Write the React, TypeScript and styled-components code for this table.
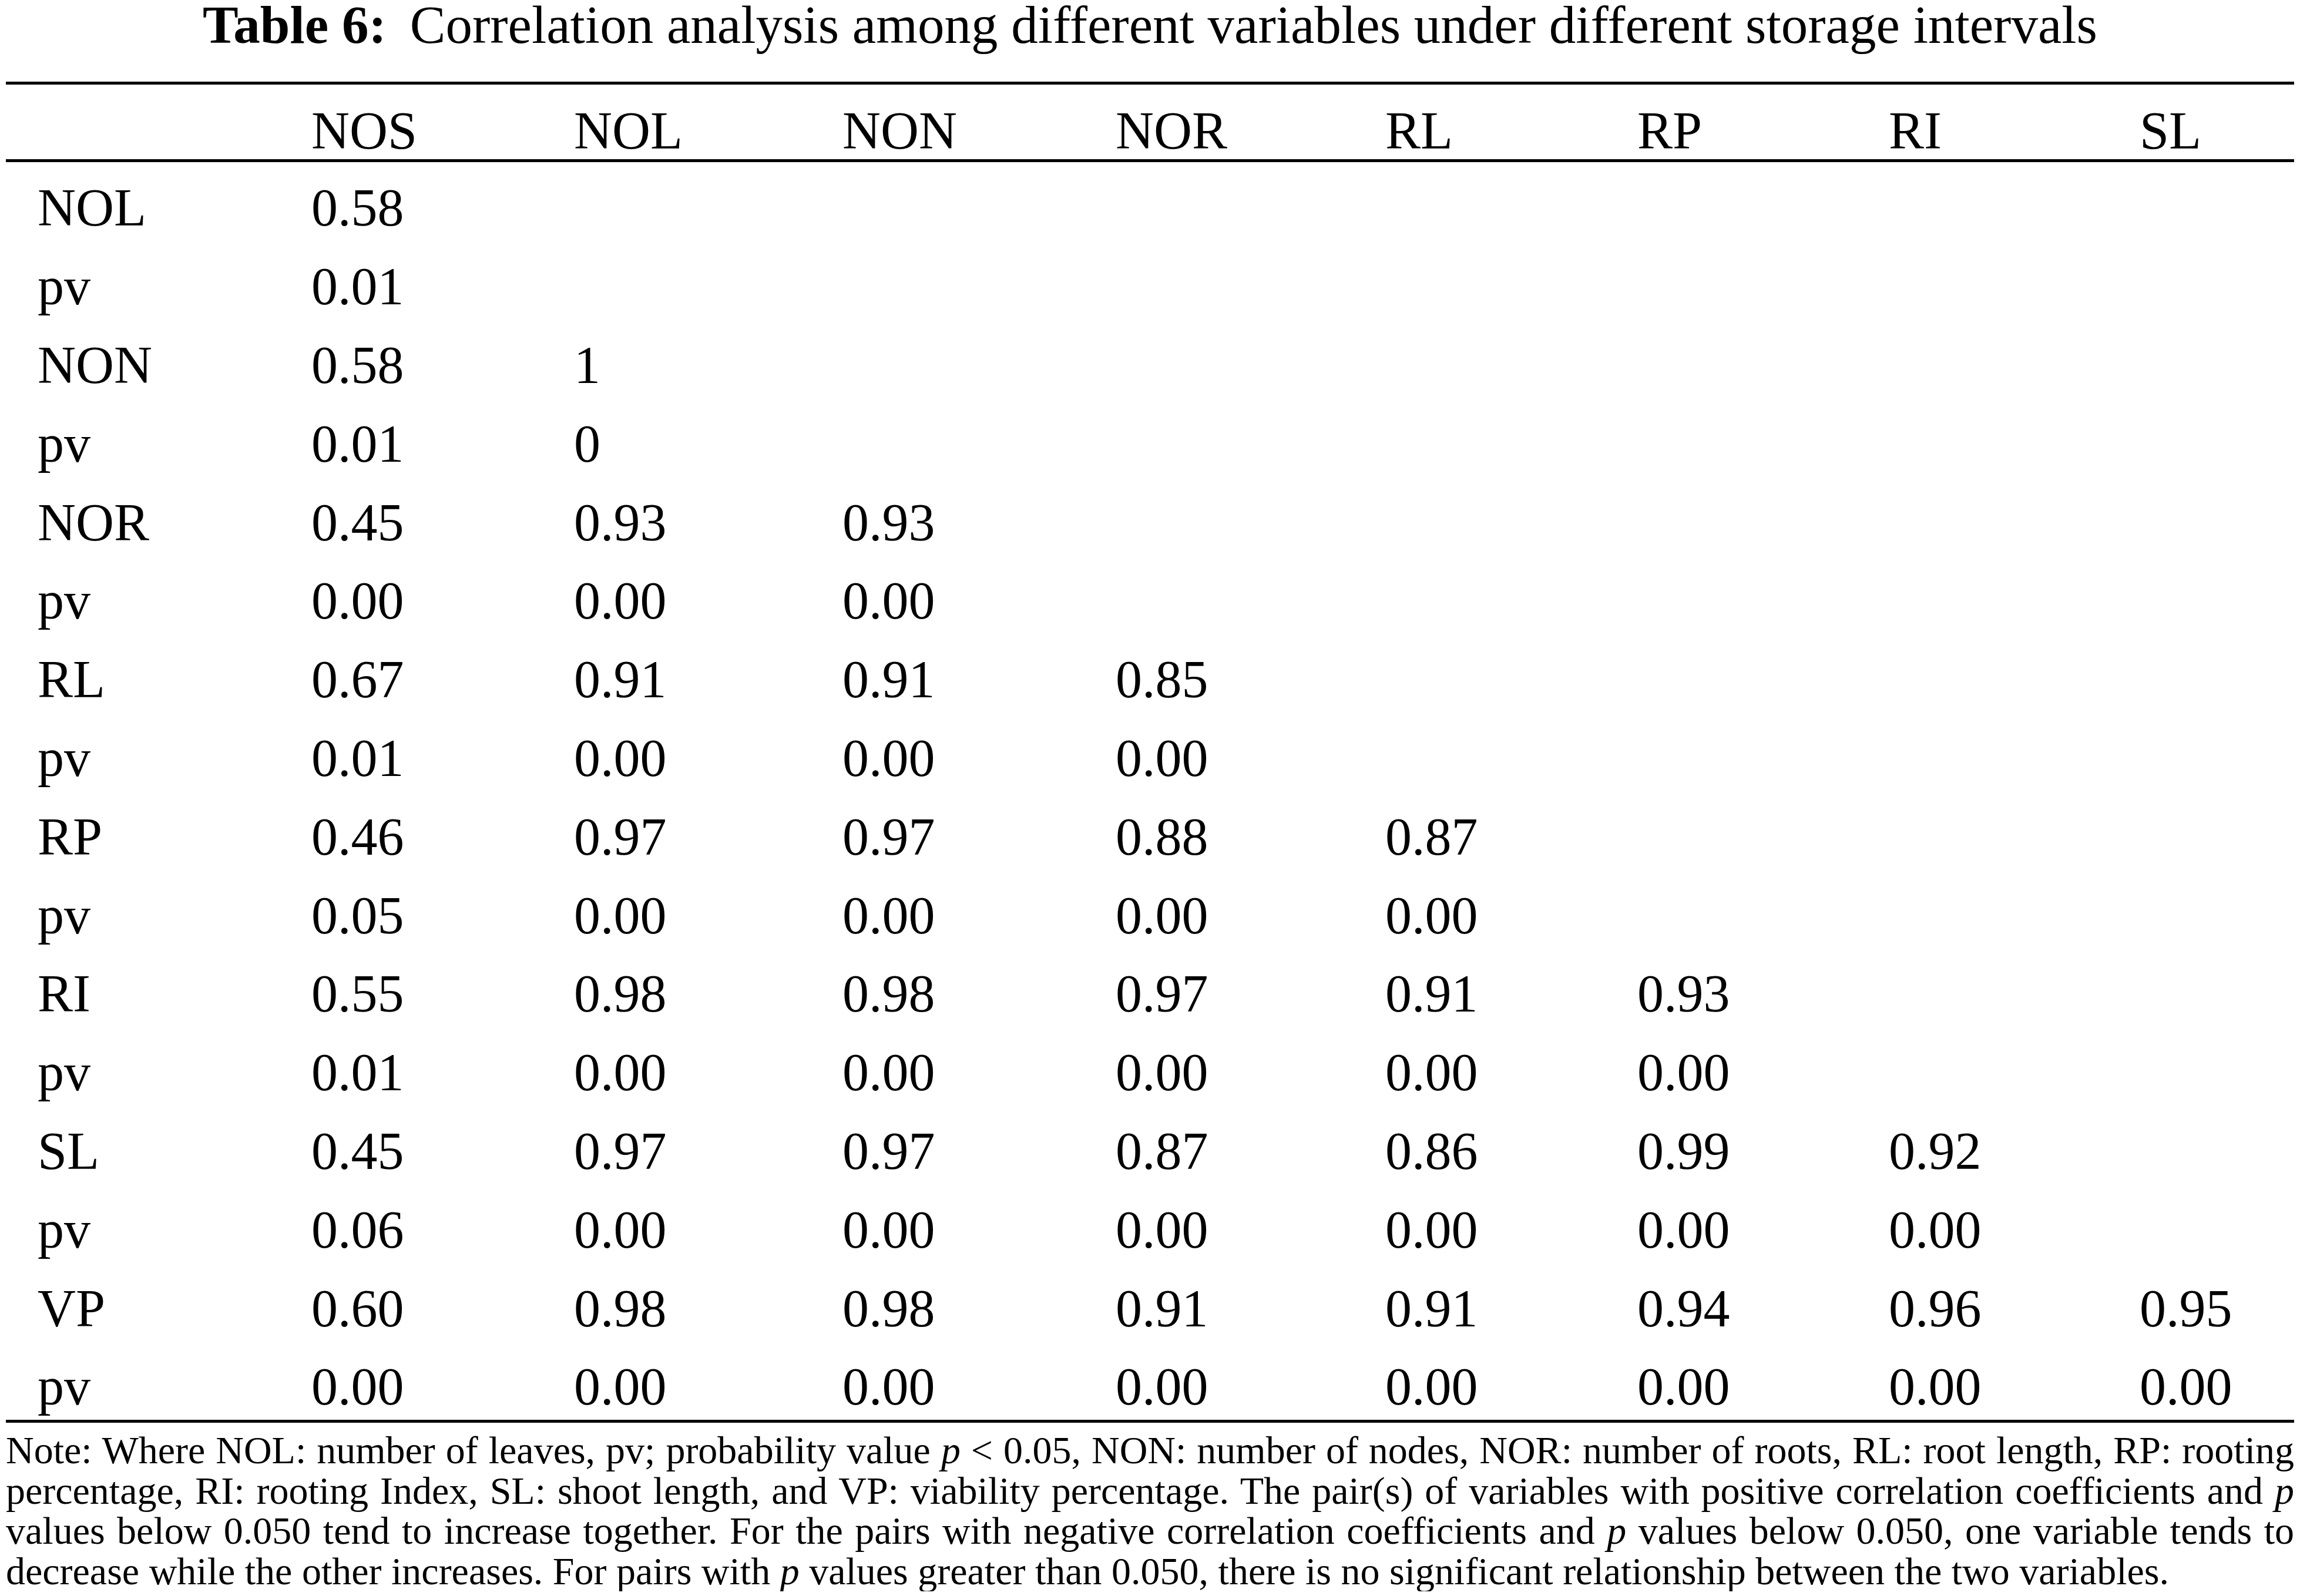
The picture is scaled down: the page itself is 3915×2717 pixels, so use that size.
import React from 'react'
import styled, { createGlobalStyle } from 'styled-components'

const GlobalStyle = createGlobalStyle`
  html, body {
    margin: 0;
    padding: 0;
    background: #fff;
  }
`

// label column + one column per variable (left edges taken from the print)
const COLUMNS = '520px 447px 457px 465px 459px 429px 428px 427px 1fr'

const Page = styled.div`
  padding: 0 10px;
  font-family: "Liberation Serif", "Times New Roman", serif;
  color: #000;
`

const Caption = styled.div`
  font-size: 91px;
  line-height: 85px;
  text-align: center;
  margin-bottom: 54px;
  white-space: nowrap;

  & > b {
    font-weight: bold;
    margin-right: 40px;
  }
`

const Table = styled.div`
  border-top: 5px solid #000;
  border-bottom: 5px solid #000;
  font-size: 90px;
`

const Row = styled.div<{ $head?: boolean }>`
  display: grid;
  grid-template-columns: ${COLUMNS};
  height: ${p => (p.$head ? '132px' : '133.8px')};
  padding-top: ${p => (p.$head ? '25px' : '23.4px')};
  line-height: ${p => (p.$head ? '107px' : '110.4px')};
  box-sizing: border-box;
  border-bottom: ${p => (p.$head ? '5px solid #000' : 'none')};
  white-space: nowrap;
`

const Label = styled.div`
  padding-left: 54px;
`

const Cell = styled.div``

const Note = styled.div`
  margin-top: 13.5px;
  font-size: 66px;
  line-height: 68.5px;

  & i {
    font-style: italic;
  }
`

const NoteLine = styled.div<{ $last?: boolean }>`
  white-space: nowrap;
  text-align: ${p => (p.$last ? 'left' : 'justify')};
  text-align-last: ${p => (p.$last ? 'left' : 'justify')};
`

const heads = ['NOS', 'NOL', 'NON', 'NOR', 'RL', 'RP', 'RI', 'SL']

const rows: [string, string[]][] = [
  ['NOL', ['0.58']],
  ['pv', ['0.01']],
  ['NON', ['0.58', '1']],
  ['pv', ['0.01', '0']],
  ['NOR', ['0.45', '0.93', '0.93']],
  ['pv', ['0.00', '0.00', '0.00']],
  ['RL', ['0.67', '0.91', '0.91', '0.85']],
  ['pv', ['0.01', '0.00', '0.00', '0.00']],
  ['RP', ['0.46', '0.97', '0.97', '0.88', '0.87']],
  ['pv', ['0.05', '0.00', '0.00', '0.00', '0.00']],
  ['RI', ['0.55', '0.98', '0.98', '0.97', '0.91', '0.93']],
  ['pv', ['0.01', '0.00', '0.00', '0.00', '0.00', '0.00']],
  ['SL', ['0.45', '0.97', '0.97', '0.87', '0.86', '0.99', '0.92']],
  ['pv', ['0.06', '0.00', '0.00', '0.00', '0.00', '0.00', '0.00']],
  ['VP', ['0.60', '0.98', '0.98', '0.91', '0.91', '0.94', '0.96', '0.95']],
  ['pv', ['0.00', '0.00', '0.00', '0.00', '0.00', '0.00', '0.00', '0.00']],
]

export default function App() {
  return (
    <Page>
      <GlobalStyle />
      <Caption>
        <b>Table 6:</b>Correlation analysis among different variables under different storage intervals
      </Caption>

      <Table>
        <Row $head>
          <Label />
          {heads.map(h => (
            <Cell key={h}>{h}</Cell>
          ))}
        </Row>
        {rows.map(([label, values], i) => (
          <Row key={i}>
            <Label>{label}</Label>
            {values.map((v, j) => (
              <Cell key={j}>{v}</Cell>
            ))}
          </Row>
        ))}
      </Table>

      <Note>
        <NoteLine>
          Note: Where NOL: number of leaves, pv; probability value <i>p</i> &lt; 0.05, NON: number of nodes, NOR: number of roots, RL: root length, RP: rooting
        </NoteLine>
        <NoteLine>
          percentage, RI: rooting Index, SL: shoot length, and VP: viability percentage. The pair(s) of variables with positive correlation coefficients and <i>p</i>
        </NoteLine>
        <NoteLine>
          values below 0.050 tend to increase together. For the pairs with negative correlation coefficients and <i>p</i> values below 0.050, one variable tends to
        </NoteLine>
        <NoteLine $last>
          decrease while the other increases. For pairs with <i>p</i> values greater than 0.050, there is no significant relationship between the two variables.
        </NoteLine>
      </Note>
    </Page>
  )
}
